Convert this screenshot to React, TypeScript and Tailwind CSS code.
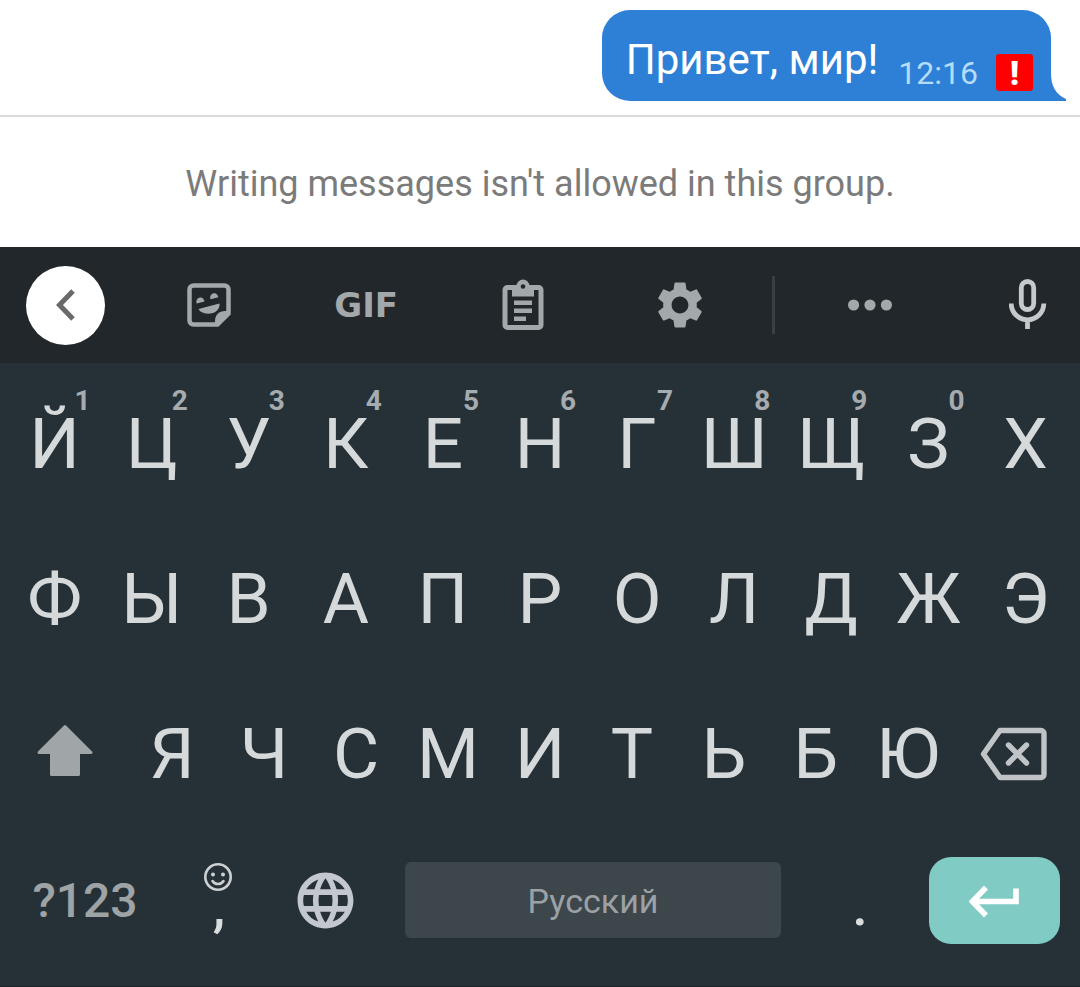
import type { ReactNode } from 'react'
import { MdLanguage, MdSettings } from 'react-icons/md'

const TOP_ROW = [
  { letter: 'Й', hint: '1' },
  { letter: 'Ц', hint: '2' },
  { letter: 'У', hint: '3' },
  { letter: 'К', hint: '4' },
  { letter: 'Е', hint: '5' },
  { letter: 'Н', hint: '6' },
  { letter: 'Г', hint: '7' },
  { letter: 'Ш', hint: '8' },
  { letter: 'Щ', hint: '9' },
  { letter: 'З', hint: '0' },
  { letter: 'Х' },
]
const MIDDLE_ROW = ['Ф', 'Ы', 'В', 'А', 'П', 'Р', 'О', 'Л', 'Д', 'Ж', 'Э']
const BOTTOM_ROW = ['Я', 'Ч', 'С', 'М', 'И', 'Т', 'Ь', 'Б', 'Ю']

function ChevronIcon() {
  return (
    <svg width="19" height="32" viewBox="0 0 19 32" fill="none" stroke="#6a6a6a" strokeWidth="5">
      <path d="M17 2 3.500 16 17 30" />
    </svg>
  )
}

function StickerIcon() {
  return (
    <svg width="44" height="44" viewBox="0 0 44 44">
      <path
        d="M6.500 2.500h31a4 4 0 0 1 4 4v24l-11 11h-24a4 4 0 0 1-4-4v-31a4 4 0 0 1 4-4z"
        fill="none"
        stroke="currentColor"
        strokeWidth="4.500"
      />
      <path d="M28 43v-5c0-6 4-10 10-10h5v3L31 43z" fill="currentColor" />
      <path
        d="M9.700 20.500c-1-3 .8-5.500 3.300-6s4 1.500 4.500 4zM23.500 16.300c-1-3 .8-5.500 3.300-6s4 1.500 4.500 4z"
        fill="currentColor"
      />
      <path d="M11.500 26 32.500 20.500c.5 5-3 8.500-7.500 9.700S14 30.500 11.500 26z" fill="currentColor" />
    </svg>
  )
}

function ClipboardIcon() {
  return (
    <svg width="42" height="52" viewBox="0 -2 42 52">
      <rect x="3" y="6.500" width="36" height="40" rx="2.500" fill="none" stroke="currentColor" strokeWidth="5" />
      <path d="M10 5h4.500a6.500 6.500 0 0 1 13 0H32v10.500H10z" fill="currentColor" />
      <circle cx="21" cy="5.500" r="2.300" fill="#22272b" />
      <path d="M12 19.500h18V24H12zM12 27.500h18V32H12zM12 35.500h12V40H12z" fill="currentColor" />
    </svg>
  )
}

function MoreIcon() {
  return (
    <svg width="44" height="12" viewBox="0 0 44 12" fill="currentColor">
      <circle cx="5.600" cy="6" r="5.600" />
      <circle cx="22" cy="6" r="5.600" />
      <circle cx="38.400" cy="6" r="5.600" />
    </svg>
  )
}

function MicIcon() {
  return (
    <svg width="38" height="52" viewBox="0 0 38 52" fill="none" stroke="currentColor" strokeWidth="4.800">
      <rect x="12.300" y="2.500" width="12.400" height="28" rx="6.200" />
      <path d="M2.200 24.500a16.300 16.300 0 0 0 32.600 0M18.500 41v9" />
    </svg>
  )
}

function ShiftIcon() {
  return (
    <svg width="56" height="52" viewBox="0 0 56 52" fill="currentColor" stroke="currentColor" strokeWidth="3" strokeLinejoin="round">
      <path d="M28 2.500 54 28.500H41.500V50.500h-27V28.500H2z" />
    </svg>
  )
}

function BackspaceIcon() {
  return (
    <svg width="68" height="54" viewBox="0 0 68 54" fill="none" stroke="currentColor" strokeWidth="5.400" strokeLinejoin="round" strokeLinecap="round">
      <path d="M20 3.500h41a3 3 0 0 1 3 3v41a3 3 0 0 1-3 3H20L3.500 27z" />
      <path d="m28.500 18 18 18M46.500 18l-18 18" />
    </svg>
  )
}

function SmileyIcon() {
  return (
    <svg width="28" height="28" viewBox="0 0 28 28" fill="none" stroke="currentColor" strokeWidth="2.600">
      <circle cx="14" cy="14" r="12.700" />
      <path d="M8.500 18c2.500 4 8.500 4 11 0" strokeLinecap="round" />
      <circle cx="9" cy="11.500" r="2" fill="currentColor" stroke="none" />
      <circle cx="19" cy="11.500" r="2" fill="currentColor" stroke="none" />
    </svg>
  )
}

function EnterIcon() {
  return (
    <svg width="52" height="32" viewBox="2 0 52 32" fill="none" stroke="currentColor" strokeWidth="5.600">
      <path d="M19 1.500 5.500 15.500 19 29.500M5.500 15.500H49V2.500" />
    </svg>
  )
}

function ToolbarButton({ label, children }: { label: string; children: ReactNode }) {
  return (
    <button type="button" aria-label={label} className="flex flex-1 items-center justify-center">
      {children}
    </button>
  )
}

function LetterKey({ letter, hint }: { letter: string; hint?: string }) {
  return (
    <button type="button" className="relative flex flex-1 items-center justify-center text-[71px] leading-none text-[#d6d9da]">
      {letter}
      {hint && (
        <span className="absolute top-5 left-1/2 ml-5 text-[28px] leading-[30px] font-bold text-[#a5abae]">{hint}</span>
      )}
    </button>
  )
}

function Conversation() {
  return (
    <section className="flex justify-end border-b-2 border-[#d9d9d9] pt-[10px] pr-[29px] pb-[14px]">
      <div className="relative flex h-[91px] items-end rounded-[28px] rounded-br-none bg-[#2e7fd6] pr-[18px] pl-6">
        <p className="pb-4 text-[42px] leading-[50px] text-white">Привет, мир!</p>
        <time className="ml-5 pb-[9px] text-[32px] leading-[38px] text-[#b5dcf8]">12:16</time>
        <span
          role="img"
          aria-label="Not sent"
          className="mb-[10px] ml-[18px] flex h-[37px] w-[37px] items-center justify-center rounded-[3px] bg-[#fe0000] text-[34px] leading-none font-black text-white"
        >
          !
        </span>
        <svg className="absolute bottom-0 left-full" width="15" height="28" viewBox="0 0 15 28" fill="#2e7fd6">
          <path d="M-1 0H0C0 12 4 21 15 26V28H-1z" />
        </svg>
      </div>
    </section>
  )
}

function Toolbar() {
  return (
    <div className="flex h-[116px] bg-[#22272b] text-[#a3a8aa]">
      <div className="flex w-[131px] items-center justify-center">
        <button type="button" aria-label="Back" className="flex h-[79px] w-[79px] items-center justify-center rounded-full bg-white">
          <ChevronIcon />
        </button>
      </div>
      <ToolbarButton label="Stickers">
        <StickerIcon />
      </ToolbarButton>
      <button type="button" className="flex-1 font-['DejaVu_Sans',sans-serif] text-[34px] leading-none font-bold">
        GIF
      </button>
      <ToolbarButton label="Clipboard">
        <ClipboardIcon />
      </ToolbarButton>
      <ToolbarButton label="Settings">
        <MdSettings size={56} />
      </ToolbarButton>
      <div className="ml-[14px] h-[58px] w-[3px] self-center bg-[#3a3f43]" />
      <div className="mr-[10px] flex w-[190px]">
        <ToolbarButton label="More">
          <MoreIcon />
        </ToolbarButton>
      </div>
      <div className="flex w-[105px] text-[#c6c9cb]">
        <ToolbarButton label="Voice input">
          <MicIcon />
        </ToolbarButton>
      </div>
    </div>
  )
}

function Keyboard() {
  return (
    <div className="flex-1 border-b border-[#1c2428] bg-[#263137] pt-[3px]">
      <div className="flex h-[155px] px-[6px]">
        {TOP_ROW.map((key) => (
          <LetterKey key={key.letter} letter={key.letter} hint={key.hint} />
        ))}
      </div>
      <div className="flex h-[155px] px-[6px]">
        {MIDDLE_ROW.map((letter) => (
          <LetterKey key={letter} letter={letter} />
        ))}
      </div>
      <div className="flex h-[155px] px-[6px]">
        <button type="button" aria-label="Shift" className="flex w-[120px] items-center justify-center pr-[2px] pb-2 text-[#a0a5a7]">
          <ShiftIcon />
        </button>
        {BOTTOM_ROW.map((letter) => (
          <LetterKey key={letter} letter={letter} />
        ))}
        <button type="button" aria-label="Backspace" className="flex w-[120px] items-center justify-center text-[#c0c4c6]">
          <BackspaceIcon />
        </button>
      </div>
      <div className="flex h-[138px] items-center px-5">
        <button type="button" className="w-[130px] pt-[2px] text-5xl leading-none font-medium text-[#9ea3a5]">
          ?123
        </button>
        <button type="button" className="relative ml-4 h-full w-[106px] pt-3 text-[56px] leading-none font-medium text-[#dadddd]">
          ,
          <span className="absolute top-8 left-1/2 -ml-[15px] text-[#ccd0d2]">
            <SmileyIcon />
          </span>
        </button>
        <button type="button" aria-label="Switch language" className="flex w-[106px] justify-center text-[#c3c8ce]">
          <MdLanguage size={67} />
        </button>
        <button type="button" className="ml-[27px] h-[76px] flex-1 rounded-md bg-[#3c464b] pt-[2px] text-[34px] text-[#9ba1a4]">
          Русский
        </button>
        <button type="button" className="ml-[10px] h-full w-[138px] pt-3 text-[56px] leading-none font-medium text-[#dadddd]">
          .
        </button>
        <button
          type="button"
          aria-label="Enter"
          className="flex h-[87px] w-[131px] items-center justify-center rounded-[22px] bg-[#80cbc4] pt-1 text-white"
        >
          <EnterIcon />
        </button>
      </div>
    </div>
  )
}

export default function App() {
  return (
    <main className="flex min-h-screen flex-col bg-white font-[Roboto,sans-serif]">
      <Conversation />
      <p className="flex h-[130px] items-center justify-center pt-1 text-[36px] text-[#7b7b7b]">
        Writing messages isn't allowed in this group.
      </p>
      <Toolbar />
      <Keyboard />
    </main>
  )
}
